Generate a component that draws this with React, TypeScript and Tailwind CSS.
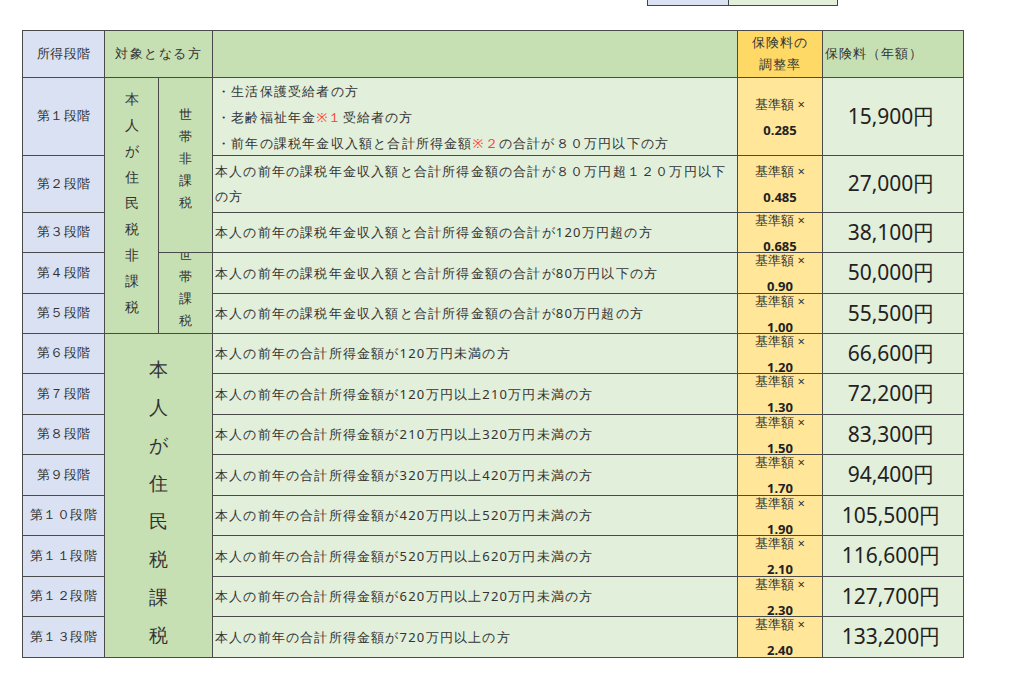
import React from 'react';

const stages = ['第１段階', '第２段階', '第３段階', '第４段階', '第５段階', '第６段階', '第７段階', '第８段階', '第９段階', '第１０段階', '第１１段階', '第１２段階', '第１３段階'];
const rates = ['0.285', '0.485', '0.685', '0.90', '1.00', '1.20', '1.30', '1.50', '1.70', '1.90', '2.10', '2.30', '2.40'];
const fees = ['15,900円', '27,000円', '38,100円', '50,000円', '55,500円', '66,600円', '72,200円', '83,300円', '94,400円', '105,500円', '116,600円', '127,700円', '133,200円'];
const descs = [
  '',
  '本人の前年の課税年金収入額と合計所得金額の合計が８０万円超１２０万円以下の方',
  '本人の前年の課税年金収入額と合計所得金額の合計が120万円超の方',
  '本人の前年の課税年金収入額と合計所得金額の合計が80万円以下の方',
  '本人の前年の課税年金収入額と合計所得金額の合計が80万円超の方',
  '本人の前年の合計所得金額が120万円未満の方',
  '本人の前年の合計所得金額が120万円以上210万円未満の方',
  '本人の前年の合計所得金額が210万円以上320万円未満の方',
  '本人の前年の合計所得金額が320万円以上420万円未満の方',
  '本人の前年の合計所得金額が420万円以上520万円未満の方',
  '本人の前年の合計所得金額が520万円以上620万円未満の方',
  '本人の前年の合計所得金額が620万円以上720万円未満の方',
  '本人の前年の合計所得金額が720万円以上の方',
];

const Vertical = ({ text, className }: { text: string; className: string }) => (
  <div className={`flex flex-col items-center ${className}`}>
    {text.split('').map((c, i) => (
      <span key={i}>{c}</span>
    ))}
  </div>
);

export default function App() {
  return (
    <div className="relative w-[1020px] h-[690px] bg-white text-[#333] font-['Noto_Sans_CJK_JP',sans-serif] overflow-hidden">
      {/* fragment of the table above */}
      <div className="absolute left-[647px] top-[-10px] flex h-[16px] border border-[#444]">
        <div className="w-[81px] bg-[#d9e1f2] border-r border-[#444]" />
        <div className="w-[108px] bg-[#e2efda]" />
      </div>

      <div className="absolute left-[22px] top-[30px] grid grid-cols-[81px_53px_53px_524px_84px_140px] grid-rows-[46px_77px_56px_39px_40px_39px_39px_40px_39px_40px_39px_40px_39px_40px] gap-px bg-[#4a4a4a] border border-[#4a4a4a] text-[12.5px]">
        {/* header */}
        <div className="bg-[#d9e1f2] flex items-center justify-center tracking-[0.5px]">所得段階</div>
        <div className="col-span-2 bg-[#c6e0b4] flex items-center pl-[10px] tracking-[1.5px]">対象となる方</div>
        <div className="bg-[#c6e0b4]" />
        <div className="bg-[#ffd966] flex flex-col items-center justify-center leading-[22px] tracking-[1px]">
          <span>保険料の</span>
          <span>調整率</span>
        </div>
        <div className="bg-[#c6e0b4] flex items-center pl-[2px] tracking-[1px]">保険料（年額）</div>

        {/* stage column */}
        {stages.map((s, i) => (
          <div key={'s' + i} className="bg-[#d9e1f2] flex items-center justify-center tracking-[0.5px]" style={{ gridColumn: 1, gridRow: i + 2 }}>
            {s}
          </div>
        ))}

        {/* target columns */}
        <div className="bg-[#c6e0b4] flex justify-center pt-[8px] leading-[26px] text-[13.5px]" style={{ gridColumn: 2, gridRow: '2 / 7' }}>
          <Vertical text="本人が住民税非課税" className="" />
        </div>
        <div className="bg-[#c6e0b4] flex justify-center pt-[25px] leading-[22px] text-[13px]" style={{ gridColumn: 3, gridRow: '2 / 5' }}>
          <Vertical text="世帯非課税" className="" />
        </div>
        <div className="bg-[#c6e0b4] flex justify-center items-start overflow-hidden leading-[22px] text-[13px]" style={{ gridColumn: 3, gridRow: '5 / 7' }}>
          <Vertical text="世帯課税" className="mt-[-10px]" />
        </div>
        <div className="bg-[#c6e0b4] flex justify-center pt-[16px] leading-[38px] text-[19px]" style={{ gridColumn: '2 / 4', gridRow: '7 / 15' }}>
          <Vertical text="本人が住民税課税" className="" />
        </div>

        {/* descriptions */}
        <div className="bg-[#e2efda] flex flex-col justify-center pl-[4px] leading-[26px] tracking-[1.2px] text-[13px]" style={{ gridColumn: 4, gridRow: 2 }}>
          <span>・生活保護受給者の方</span>
          <span>・老齢福祉年金<span className="text-[#ff3b3b]">※１</span>受給者の方</span>
          <span>・前年の課税年金収入額と合計所得金額<span className="text-[#ff3b3b]">※２</span>の合計が８０万円以下の方</span>
        </div>
        {descs.slice(1).map((d, i) => (
          <div key={'d' + i} className="bg-[#e2efda] flex items-center px-[2px] leading-[25px] tracking-[1.2px] text-[13px]" style={{ gridColumn: 4, gridRow: i + 3 }}>
            {d}
          </div>
        ))}

        {/* rates */}
        {rates.map((r, i) => (
          <div key={'r' + i} className="bg-[#ffe699] flex flex-col items-center justify-center overflow-hidden leading-[26px] text-[13px]" style={{ gridColumn: 5, gridRow: i + 2 }}>
            <span>基準額 ×</span>
            <span className="font-['Liberation_Sans',sans-serif] font-bold text-[13px] text-[#222]">{r}</span>
          </div>
        ))}

        {/* fees */}
        {fees.map((f, i) => (
          <div key={'f' + i} className="bg-[#e2efda] flex items-center justify-center pr-[4px] text-[21px] text-[#222]" style={{ gridColumn: 6, gridRow: i + 2 }}>
            {f}
          </div>
        ))}
      </div>
    </div>
  );
}
